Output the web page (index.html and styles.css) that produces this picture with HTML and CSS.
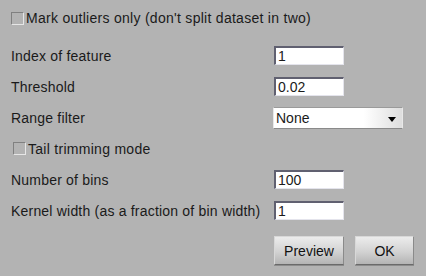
FILE: index.html
```html
<!DOCTYPE html>
<html>
<head>
<meta charset="utf-8">
<link rel="stylesheet" href="styles.css">
</head>
<body>
<div class="dialog">
  <label class="row row-top check-row">
    <span class="checkbox"></span>
    <span class="check-label">Mark outliers only (don't split dataset in two)</span>
  </label>
  <div class="fields">
    <div class="row"><span class="label">Index of feature</span><input class="field" type="text" value="1"></div>
    <div class="row"><span class="label">Threshold</span><input class="field" type="text" value="0.02"></div>
    <div class="row"><span class="label">Range filter</span>
      <span class="select-wrap">
        <span class="select">None</span>
        <svg class="arrow" width="8" height="5" viewBox="0 0 8 5"><polygon points="0,0 8,0 4,5" fill="#000"/></svg>
      </span>
    </div>
    <label class="row check-row indent"><span class="checkbox"></span><span class="check-label">Tail trimming mode</span></label>
    <div class="row"><span class="label">Number of bins</span><input class="field" type="text" value="100"></div>
    <div class="row"><span class="label">Kernel width (as a fraction of bin width)</span><input class="field" type="text" value="1"></div>
  </div>
  <div class="buttons">
    <button class="btn btn-preview">Preview</button>
    <button class="btn btn-ok">OK</button>
  </div>
</div>
</body>
</html>
```

FILE: styles.css
```css
html, body {
  margin: 0;
  padding: 0;
  background: #b3b3b3;
}
.dialog {
  width: 426px;
  height: 276px;
  box-sizing: border-box;
  padding: 3px 0 0 11px;
  font-family: "Liberation Sans", Arial, sans-serif;
  font-size: 14px;
  color: #1a1a1a;
  display: flex;
  flex-direction: column;
}
.row {
  height: 31px;
  display: flex;
  align-items: center;
}
.row-top {
  height: 30px;
  margin-bottom: 7px;
}
.fields {
  display: flex;
  flex-direction: column;
}
.label {
  width: 263px;
  flex: none;
  white-space: nowrap;
  letter-spacing: 0.2px;
}
.check-row {
  cursor: default;
}
.indent {
  padding-left: 2px;
}
.checkbox {
  width: 11px;
  height: 11px;
  flex: none;
  border: 1px solid;
  border-color: #808080 #e6e6e6 #e6e6e6 #808080;
  background: #b3b3b3;
  margin-right: 2px;
}
.check-label {
  white-space: nowrap;
  letter-spacing: 0.28px;
}
.field {
  width: 70px;
  height: 19px;
  box-sizing: border-box;
  margin: 0;
  padding: 0 2px;
  border: 2px solid;
  border-color: #606070 #e4e4ec #e4e4ec #606070;
  border-width: 2px 1px 1px 2px;
  background: #fff;
  font-family: "Liberation Sans", Arial, sans-serif;
  font-size: 14px;
  color: #1a1a1a;
  outline: none;
}
.select-wrap {
  position: relative;
  margin-left: -1px;
  width: 130px;
  height: 22px;
  display: block;
}
.select {
  display: flex;
  align-items: center;
  box-sizing: border-box;
  width: 130px;
  height: 22px;
  padding-left: 2px;
  border: 1px solid;
  border-color: #9a9a9a #e8e8e8 #8a8a8a #e8e8e8;
  background: linear-gradient(to right, #ffffff 0%, #ffffff 70%, #dedede 100%);
  font-size: 14px;
}
.arrow {
  position: absolute;
  right: 7px;
  top: 10px;
}
.buttons {
  display: flex;
  margin-top: 10px;
  padding-left: 263px;
  gap: 11px;
}
.btn {
  height: 29px;
  box-sizing: border-box;
  margin: 0;
  padding: 0;
  border: 1px solid;
  border-color: #d8d8d8 #8a8a8a #6a6a6a #d8d8d8;
  background: linear-gradient(to bottom, #ececec 0%, #d2d2d2 55%, #b4b4b4 100%);
  box-shadow: 0 1px 0 #8c8c8c;
  font-family: "Liberation Sans", Arial, sans-serif;
  font-size: 14px;
  color: #111;
}
.btn-preview {
  width: 70px;
}
.btn-ok {
  width: 59px;
}
```
